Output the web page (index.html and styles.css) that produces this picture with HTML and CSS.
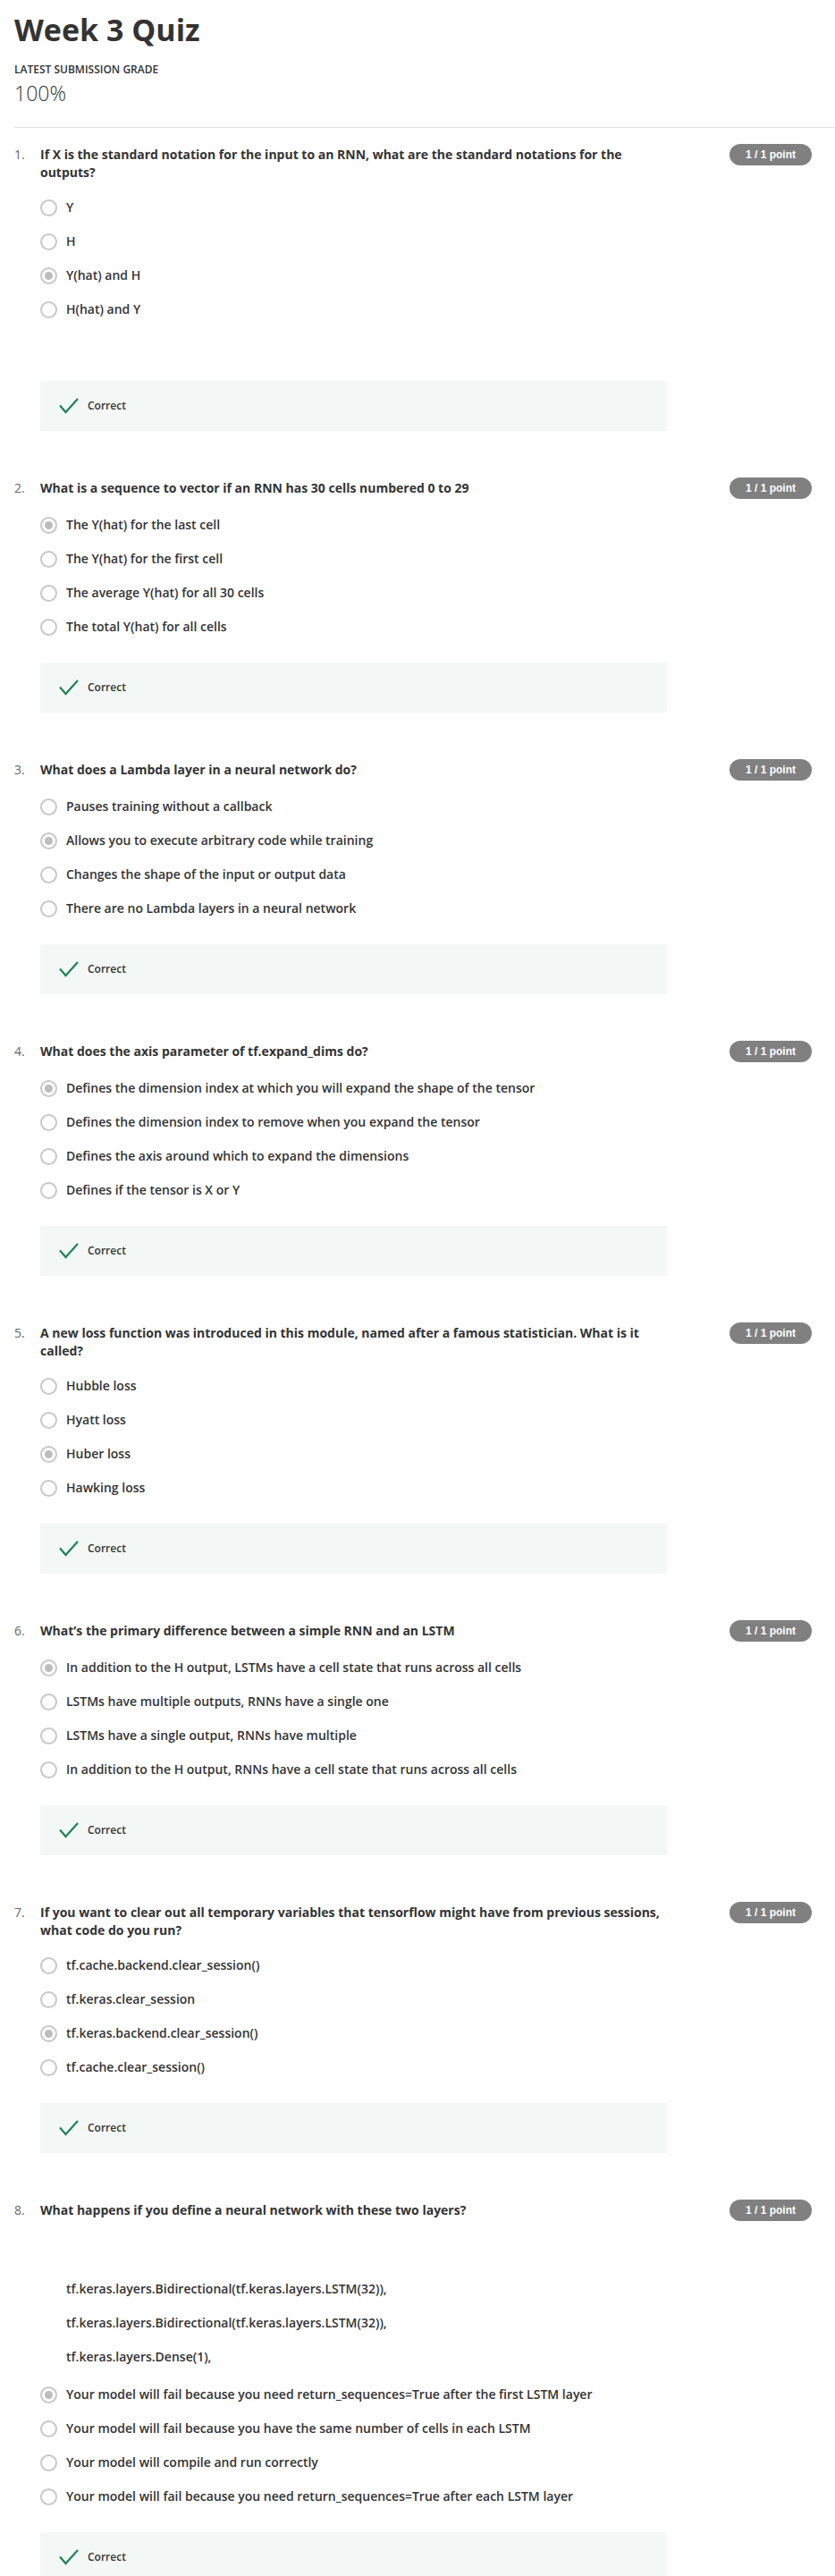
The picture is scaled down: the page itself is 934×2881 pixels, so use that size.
FILE: index.html
```html
<!DOCTYPE html>
<html lang="en">
<head>
<meta charset="utf-8">
<title>Week 3 Quiz</title>
<link rel="stylesheet" href="styles.css">
</head>
<body>
<div class="page">
  <h1 class="title">Week 3 Quiz</h1>
  <div class="grade-label">Latest Submission Grade</div>
  <div class="grade">100%</div>
  <div class="divider"></div>

  <div class="questions">
    <section class="question">
      <div class="q-head">
        <span class="q-num">1.</span>
        <div class="q-text">If X is the standard notation for the input to an RNN, what are the standard notations for the outputs?</div>
        <span class="badge">1 / 1 point</span>
      </div>
      <div class="q-body">
        <div class="options">
          <div class="option"><span class="radio"></span><span class="opt-text">Y</span></div>
          <div class="option"><span class="radio"></span><span class="opt-text">H</span></div>
          <div class="option"><span class="radio checked"></span><span class="opt-text">Y(hat) and H</span></div>
          <div class="option"><span class="radio"></span><span class="opt-text">H(hat) and Y</span></div>
        </div>
        <div class="spacer"></div>
        <div class="feedback"><svg class="check" width="22" height="18" viewBox="0 0 22 18"><path d="M1 8.5 L7.5 16 L21 1" fill="none" stroke="#1f8354" stroke-width="2.2"/></svg><span class="feedback-text">Correct</span></div>
      </div>
    </section>

    <section class="question">
      <div class="q-head">
        <span class="q-num">2.</span>
        <div class="q-text">What is a sequence to vector if an RNN has 30 cells numbered 0 to 29</div>
        <span class="badge">1 / 1 point</span>
      </div>
      <div class="q-body">
        <div class="options">
          <div class="option"><span class="radio checked"></span><span class="opt-text">The Y(hat) for the last cell</span></div>
          <div class="option"><span class="radio"></span><span class="opt-text">The Y(hat) for the first cell</span></div>
          <div class="option"><span class="radio"></span><span class="opt-text">The average Y(hat) for all 30 cells</span></div>
          <div class="option"><span class="radio"></span><span class="opt-text">The total Y(hat) for all cells</span></div>
        </div>
        <div class="feedback"><svg class="check" width="22" height="18" viewBox="0 0 22 18"><path d="M1 8.5 L7.5 16 L21 1" fill="none" stroke="#1f8354" stroke-width="2.2"/></svg><span class="feedback-text">Correct</span></div>
      </div>
    </section>

    <section class="question">
      <div class="q-head">
        <span class="q-num">3.</span>
        <div class="q-text">What does a Lambda layer in a neural network do?</div>
        <span class="badge">1 / 1 point</span>
      </div>
      <div class="q-body">
        <div class="options">
          <div class="option"><span class="radio"></span><span class="opt-text">Pauses training without a callback</span></div>
          <div class="option"><span class="radio checked"></span><span class="opt-text">Allows you to execute arbitrary code while training</span></div>
          <div class="option"><span class="radio"></span><span class="opt-text">Changes the shape of the input or output data</span></div>
          <div class="option"><span class="radio"></span><span class="opt-text">There are no Lambda layers in a neural network</span></div>
        </div>
        <div class="feedback"><svg class="check" width="22" height="18" viewBox="0 0 22 18"><path d="M1 8.5 L7.5 16 L21 1" fill="none" stroke="#1f8354" stroke-width="2.2"/></svg><span class="feedback-text">Correct</span></div>
      </div>
    </section>

    <section class="question">
      <div class="q-head">
        <span class="q-num">4.</span>
        <div class="q-text">What does the axis parameter of tf.expand_dims do?</div>
        <span class="badge">1 / 1 point</span>
      </div>
      <div class="q-body">
        <div class="options">
          <div class="option"><span class="radio checked"></span><span class="opt-text">Defines the dimension index at which you will expand the shape of the tensor</span></div>
          <div class="option"><span class="radio"></span><span class="opt-text">Defines the dimension index to remove when you expand the tensor</span></div>
          <div class="option"><span class="radio"></span><span class="opt-text">Defines the axis around which to expand the dimensions</span></div>
          <div class="option"><span class="radio"></span><span class="opt-text">Defines if the tensor is X or Y</span></div>
        </div>
        <div class="feedback"><svg class="check" width="22" height="18" viewBox="0 0 22 18"><path d="M1 8.5 L7.5 16 L21 1" fill="none" stroke="#1f8354" stroke-width="2.2"/></svg><span class="feedback-text">Correct</span></div>
      </div>
    </section>

    <section class="question">
      <div class="q-head">
        <span class="q-num">5.</span>
        <div class="q-text">A new loss function was introduced in this module, named after a famous statistician. What is it called?</div>
        <span class="badge">1 / 1 point</span>
      </div>
      <div class="q-body">
        <div class="options">
          <div class="option"><span class="radio"></span><span class="opt-text">Hubble loss</span></div>
          <div class="option"><span class="radio"></span><span class="opt-text">Hyatt loss</span></div>
          <div class="option"><span class="radio checked"></span><span class="opt-text">Huber loss</span></div>
          <div class="option"><span class="radio"></span><span class="opt-text">Hawking loss</span></div>
        </div>
        <div class="feedback"><svg class="check" width="22" height="18" viewBox="0 0 22 18"><path d="M1 8.5 L7.5 16 L21 1" fill="none" stroke="#1f8354" stroke-width="2.2"/></svg><span class="feedback-text">Correct</span></div>
      </div>
    </section>

    <section class="question">
      <div class="q-head">
        <span class="q-num">6.</span>
        <div class="q-text">What’s the primary difference between a simple RNN and an LSTM</div>
        <span class="badge">1 / 1 point</span>
      </div>
      <div class="q-body">
        <div class="options">
          <div class="option"><span class="radio checked"></span><span class="opt-text">In addition to the H output, LSTMs have a cell state that runs across all cells</span></div>
          <div class="option"><span class="radio"></span><span class="opt-text">LSTMs have multiple outputs, RNNs have a single one</span></div>
          <div class="option"><span class="radio"></span><span class="opt-text">LSTMs have a single output, RNNs have multiple</span></div>
          <div class="option"><span class="radio"></span><span class="opt-text">In addition to the H output, RNNs have a cell state that runs across all cells</span></div>
        </div>
        <div class="feedback"><svg class="check" width="22" height="18" viewBox="0 0 22 18"><path d="M1 8.5 L7.5 16 L21 1" fill="none" stroke="#1f8354" stroke-width="2.2"/></svg><span class="feedback-text">Correct</span></div>
      </div>
    </section>

    <section class="question">
      <div class="q-head">
        <span class="q-num">7.</span>
        <div class="q-text">If you want to clear out all temporary variables that tensorflow might have from previous sessions, what code do you run?</div>
        <span class="badge">1 / 1 point</span>
      </div>
      <div class="q-body">
        <div class="options">
          <div class="option"><span class="radio"></span><span class="opt-text">tf.cache.backend.clear_session()</span></div>
          <div class="option"><span class="radio"></span><span class="opt-text">tf.keras.clear_session</span></div>
          <div class="option"><span class="radio checked"></span><span class="opt-text">tf.keras.backend.clear_session()</span></div>
          <div class="option"><span class="radio"></span><span class="opt-text">tf.cache.clear_session()</span></div>
        </div>
        <div class="feedback"><svg class="check" width="22" height="18" viewBox="0 0 22 18"><path d="M1 8.5 L7.5 16 L21 1" fill="none" stroke="#1f8354" stroke-width="2.2"/></svg><span class="feedback-text">Correct</span></div>
      </div>
    </section>

    <section class="question">
      <div class="q-head">
        <span class="q-num">8.</span>
        <div class="q-text">What happens if you define a neural network with these two layers?</div>
        <span class="badge">1 / 1 point</span>
      </div>
      <div class="q-body">
        <div class="code-lines">
          <div class="code-line">tf.keras.layers.Bidirectional(tf.keras.layers.LSTM(32)),</div>
          <div class="code-line">tf.keras.layers.Bidirectional(tf.keras.layers.LSTM(32)),</div>
          <div class="code-line">tf.keras.layers.Dense(1),</div>
        </div>
        <div class="options options-after-code">
          <div class="option"><span class="radio checked"></span><span class="opt-text">Your model will fail because you need return_sequences=True after the first LSTM layer</span></div>
          <div class="option"><span class="radio"></span><span class="opt-text">Your model will fail because you have the same number of cells in each LSTM</span></div>
          <div class="option"><span class="radio"></span><span class="opt-text">Your model will compile and run correctly</span></div>
          <div class="option"><span class="radio"></span><span class="opt-text">Your model will fail because you need return_sequences=True after each LSTM layer</span></div>
        </div>
        <div class="feedback"><svg class="check" width="22" height="18" viewBox="0 0 22 18"><path d="M1 8.5 L7.5 16 L21 1" fill="none" stroke="#1f8354" stroke-width="2.2"/></svg><span class="feedback-text">Correct</span></div>
      </div>
    </section>
  </div>
</div>
</body>
</html>
```

FILE: styles.css
```css
* {
  box-sizing: border-box;
}

html,
body {
  margin: 0;
  padding: 0;
  background: #ffffff;
}

body {
  font-family: "Open Sans", "Liberation Sans", sans-serif;
  color: #333333;
}

.page {
  padding: 11px 0 3px 16px;
}

.title {
  margin: 0;
  font-size: 34px;
  line-height: 44px;
  font-weight: 700;
  color: #333333;
}

.grade-label {
  margin-top: 15px;
  font-size: 12px;
  line-height: 16px;
  font-weight: 600;
  text-transform: uppercase;
  color: #333333;
}

.grade {
  margin-top: 3px;
  font-size: 23px;
  line-height: 30px;
  font-weight: 300;
  color: #333333;
}

.divider {
  margin-top: 23px;
  border-top: 1px solid #e1e1e1;
}

.questions {
  padding-top: 20px;
}

.question + .question {
  margin-top: 54px;
}

.q-head {
  display: flex;
  align-items: flex-start;
  padding-right: 26px;
}

.q-num {
  flex: 0 0 29px;
  font-size: 14px;
  line-height: 20px;
  font-weight: 400;
  color: #666666;
}

.q-text {
  width: 700px;
  font-size: 14px;
  line-height: 20px;
  font-weight: 700;
  color: #333333;
}

.badge {
  margin-left: auto;
  margin-top: -2px;
  height: 24px;
  padding: 0 18px;
  border-radius: 12px;
  background: #808080;
  color: #ffffff;
  font-family: "Liberation Sans", Arial, sans-serif;
  font-size: 12px;
  line-height: 24px;
  font-weight: 700;
  white-space: nowrap;
}

.q-body {
  padding-left: 29px;
}

.options {
  margin-top: 10px;
}

.option {
  display: flex;
  align-items: center;
  gap: 10px;
  height: 38px;
}

.radio {
  flex: 0 0 19px;
  width: 19px;
  height: 19px;
  border: 2px solid #c8c8c8;
  border-radius: 50%;
  background: #ffffff;
  display: flex;
  align-items: center;
  justify-content: center;
}

.radio.checked::after {
  content: "";
  width: 9px;
  height: 9px;
  border-radius: 50%;
  background: #bdbdbd;
}

.opt-text {
  font-size: 14px;
  line-height: 20px;
  font-weight: 600;
  color: #333333;
}

.spacer {
  height: 40px;
}

.code-lines {
  margin-top: 57px;
  padding-left: 29px;
}

.code-line {
  height: 38px;
  display: flex;
  align-items: center;
  font-size: 14px;
  line-height: 20px;
  font-weight: 600;
  color: #333333;
}

.options-after-code {
  margin-top: 4px;
}

.feedback {
  margin-top: 21px;
  width: 701px;
  height: 56px;
  background: #f3f8f6;
  display: flex;
  align-items: center;
  gap: 10px;
  padding-left: 21px;
}

.check {
  display: block;
  flex: 0 0 22px;
}

.feedback-text {
  font-size: 12px;
  line-height: 16px;
  font-weight: 600;
  color: #333333;
}
```
